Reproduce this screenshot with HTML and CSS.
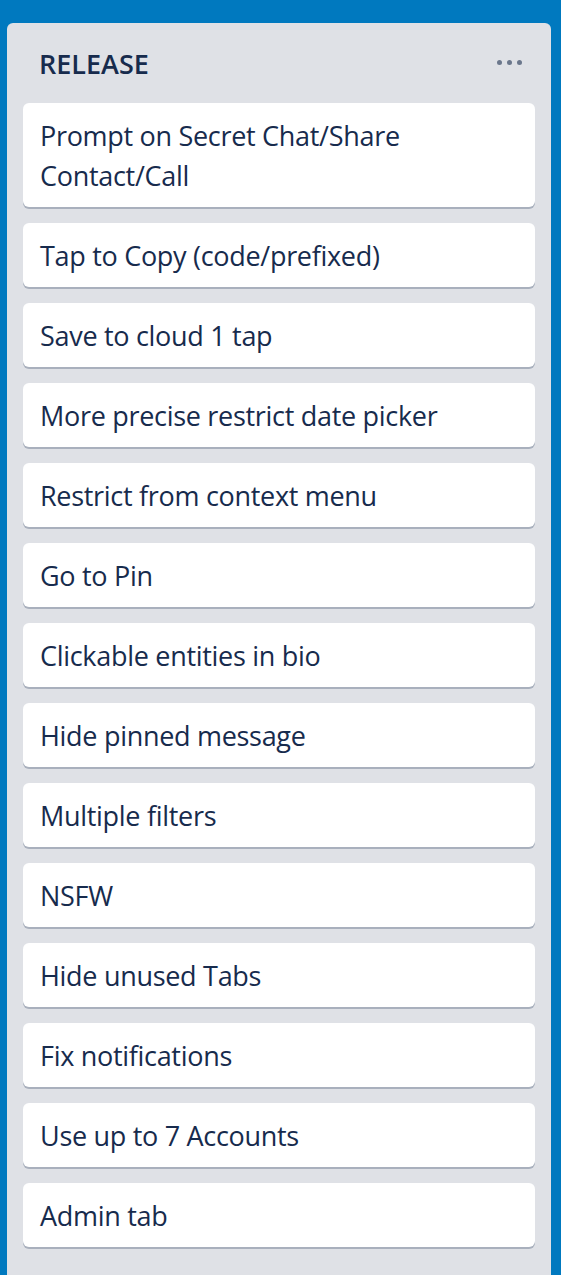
FILE: index.html
```html
<!DOCTYPE html>
<html>
<head>
<meta charset="utf-8">
<link rel="stylesheet" href="styles.css">
</head>
<body>
<div class="board">
  <div class="list">
    <div class="list-header">
      <h2 class="list-title">RELEASE</h2>
      <span class="list-menu" aria-label="menu"><i></i><i></i><i></i></span>
    </div>
    <div class="cards">
      <div class="card">Prompt on Secret Chat/Share Contact/Call</div>
      <div class="card">Tap to Copy (code/prefixed)</div>
      <div class="card">Save to cloud 1 tap</div>
      <div class="card">More precise restrict date picker</div>
      <div class="card">Restrict from context menu</div>
      <div class="card">Go to Pin</div>
      <div class="card">Clickable entities in bio</div>
      <div class="card">Hide pinned message</div>
      <div class="card">Multiple filters</div>
      <div class="card">NSFW</div>
      <div class="card">Hide unused Tabs</div>
      <div class="card">Fix notifications</div>
      <div class="card">Use up to 7 Accounts</div>
      <div class="card">Admin tab</div>
    </div>
  </div>
</div>
</body>
</html>
```

FILE: styles.css
```css
html, body {
  margin: 0;
  padding: 0;
}
body {
  background: #0079bf;
  font-family: "Open Sans", "Noto Sans", "Liberation Sans", sans-serif;
  color: #172b4d;
  overflow: hidden;
}
.board {
  padding: 23px 10px 0 7px;
}
.list {
  width: 544px;
  box-sizing: border-box;
  background: #dfe1e6;
  border-radius: 6px;
  padding: 0 16px 60px;
}
.list-header {
  height: 80px;
  display: flex;
  align-items: center;
  justify-content: space-between;
  padding: 0 13px 0 16px;
}
.list-title {
  margin: 0;
  font-size: 27px;
  font-weight: 600;
  line-height: 40px;
  letter-spacing: 0;
  color: #172b4d;
  position: relative;
  top: 1px;
}
.list-menu {
  display: flex;
  gap: 5px;
  align-items: center;
  position: relative;
  top: -1px;
}
.list-menu i {
  display: block;
  width: 5px;
  height: 5px;
  border-radius: 50%;
  background: #6b778c;
}
.cards {
  display: flex;
  flex-direction: column;
  gap: 16px;
}
.card {
  background: #fff;
  border-radius: 6px;
  box-shadow: 0 2px 0 rgba(9, 30, 66, 0.25);
  padding: 13px 16px 11px 17px;
  font-size: 27px;
  line-height: 40px;
  letter-spacing: -0.3px;
}
```
